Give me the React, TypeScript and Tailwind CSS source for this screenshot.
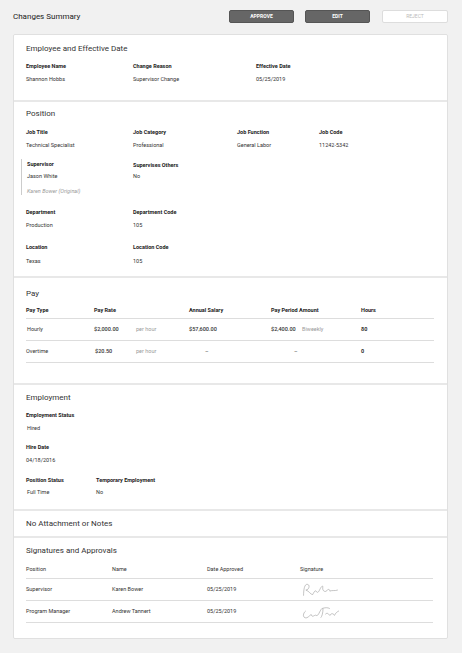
import React from "react";

const L = ({ children, className = "" }: { children: React.ReactNode; className?: string }) => (
  <div className={"text-[5.5px] font-bold text-[#222] leading-[7px] " + className}>{children}</div>
);
const V = ({ children, className = "" }: { children: React.ReactNode; className?: string }) => (
  <div className={"text-[5.5px] text-[#333] leading-[7px] " + className}>{children}</div>
);
const H = ({ children }: { children: React.ReactNode }) => (
  <div className="text-[8px] text-[#333] leading-[10px]">{children}</div>
);

function Sig({ a }: { a: boolean }) {
  return (
    <svg width="46" height="16" viewBox="0 0 40 14" fill="none" stroke="#999" strokeWidth="0.5">
      {a ? (
        <path d="M3 12 C3 6 4 2 6 2 C9 2 8 7 5 7 C8 8 9 11 11 11 C12 9 13 7 14 8 C15 10 16 9 17 7 C18 5 19 3 20 4 C19 7 21 9 23 8 C24 6 26 6 26 8 C28 7 30 8 33 7" />
      ) : (
        <path d="M5 6 C2 8 2 13 6 12 C8 11 10 8 10 10 C11 12 13 9 14 10 C16 11 17 6 19 4 C22 3 24 3 26 4 M20 4 C20 8 19 11 18 12 M22 9 C24 7 25 9 26 10 C27 8 29 8 30 10 C31 8 32 7 34 6" />
      )}
    </svg>
  );
}

export default function App() {
  return (
    <div className="w-[462px] h-[653px] bg-[#f1f1f1] overflow-hidden" style={{ fontFamily: "Roboto, 'Liberation Sans', sans-serif" }}>
      <div className="flex items-center h-[34px] pl-[13px] pr-[14px] pb-[1px]">
        <div className="text-[8px] text-[#222] flex-1">Changes Summary</div>
        <button className="w-[65px] h-[13px] bg-[#666] border border-[#555] rounded-[2px] text-white text-[5px] font-bold">APPROVE</button>
        <button className="ml-[11px] w-[65px] h-[13px] bg-[#666] border border-[#555] rounded-[2px] text-white text-[5px] font-bold">EDIT</button>
        <button className="ml-[12px] w-[66px] h-[13px] bg-white border border-[#ddd] rounded-[2px] text-[#bbb] text-[5px]">REJECT</button>
      </div>
      <div className="mx-[13px] w-[435px] bg-[#e8e8e8] border border-[#e0e0e0] rounded-[2px] flex flex-col gap-[2px] overflow-hidden">
        <div className="bg-white h-[65px] pl-[12px] pt-[9px]">
          <H>Employee and Effective Date</H>
          <div className="flex mt-[9px]">
            <div className="w-[107px]"><L>Employee Name</L><V className="mt-[6px]">Shannon Hobbs</V></div>
            <div className="w-[123px]"><L>Change Reason</L><V className="mt-[6px]">Supervisor Change</V></div>
            <div><L>Effective Date</L><V className="mt-[6px]">05/25/2019</V></div>
          </div>
        </div>
        <div className="bg-white h-[174px] pl-[12px] pt-[7px]">
          <H>Position</H>
          <div className="flex mt-[10px]">
            <div className="w-[107px]"><L>Job Title</L><V className="mt-[6px]">Technical Specialist</V></div>
            <div className="w-[104px]"><L>Job Category</L><V className="mt-[6px]">Professional</V></div>
            <div className="w-[82px]"><L>Job Function</L><V className="mt-[6px]">General Labor</V></div>
            <div><L>Job Code</L><V className="mt-[6px]">11242-5342</V></div>
          </div>
          <div className="flex mt-[10px] -ml-[5px]">
            <div className="w-[112px] border-l border-[#ccc] pl-[5px] py-[2px] h-[36px]">
              <L>Supervisor</L>
              <V className="mt-[5px]">Jason White</V>
              <V className="mt-[8px] italic text-[#999]">Karen Bower (Original)</V>
            </div>
            <div className="pt-[3px]"><L>Supervises Others</L><V className="mt-[4px]">No</V></div>
          </div>
          <div className="flex mt-[14px]">
            <div className="w-[107px]"><L>Department</L><V className="mt-[6px]">Production</V></div>
            <div><L>Department Code</L><V className="mt-[6px]">105</V></div>
          </div>
          <div className="flex mt-[15px]">
            <div className="w-[107px]"><L>Location</L><V className="mt-[7px]">Texas</V></div>
            <div><L>Location Code</L><V className="mt-[7px]">105</V></div>
          </div>
        </div>
        <div className="bg-white h-[105px] pl-[12px] pr-[13px] pt-[11px]">
          <H>Pay</H>
          <div className="flex mt-[8px] pb-[4px] border-b border-[#ddd]">
            <L className="w-[68px]">Pay Type</L>
            <L className="w-[95px]">Pay Rate</L>
            <L className="w-[82px]">Annual Salary</L>
            <L className="w-[90px]">Pay Period Amount</L>
            <L>Hours</L>
          </div>
          <div className="flex items-center h-[22px] border-b border-[#ddd]">
            <V className="w-[68px] pl-[1px]">Hourly</V>
            <V className="w-[42px] font-medium">$2,000.00</V>
            <V className="w-[53px] text-[#999]">per hour</V>
            <V className="w-[82px] font-medium">$57,600.00</V>
            <V className="w-[31px] font-medium">$2,400.00</V>
            <V className="w-[59px] text-[#999]">Biweekly</V>
            <V className="font-bold">80</V>
          </div>
          <div className="flex items-center h-[22px] border-b border-[#ddd]">
            <V className="w-[69px]">Overtime</V>
            <V className="w-[41px] font-medium">$20.50</V>
            <V className="w-[53px] text-[#999]">per hour</V>
            <V className="w-[82px] pl-[16px]">–</V>
            <V className="w-[90px] pl-[23px]">–</V>
            <V className="font-bold">0</V>
          </div>
        </div>
        <div className="bg-white h-[124px] pl-[12px] pt-[8px]">
          <H>Employment</H>
          <L className="mt-[9px]">Employment Status</L>
          <V className="mt-[6px] pl-[1px]">Hired</V>
          <L className="mt-[12px]">Hire Date</L>
          <V className="mt-[6px]">04/18/2016</V>
          <div className="flex mt-[13px]">
            <div className="w-[70px]"><L>Position Status</L><V className="mt-[5px] pl-[1px]">Full Time</V></div>
            <div><L>Temporary Employment</L><V className="mt-[5px]">No</V></div>
          </div>
        </div>
        <div className="bg-white h-[25px] pl-[12px] flex items-center">
          <H>No Attachment or Notes</H>
        </div>
        <div className="bg-white h-[100px] pl-[12px] pr-[14px] pt-[8px]">
          <H>Signatures and Approvals</H>
          <div className="flex mt-[10px] pb-[5px] border-b border-[#ddd]">
            <V className="w-[86px]">Position</V>
            <V className="w-[95px]">Name</V>
            <V className="w-[93px]">Date Approved</V>
            <V>Signature</V>
          </div>
          <div className="flex items-center h-[22px] border-b border-[#ddd]">
            <V className="w-[86px]">Supervisor</V>
            <V className="w-[95px]">Karen Bower</V>
            <V className="w-[93px]">05/25/2019</V>
            <Sig a={true} />
          </div>
          <div className="flex items-center h-[22px] border-b border-[#ddd]">
            <V className="w-[86px]">Program Manager</V>
            <V className="w-[95px]">Andrew Tannert</V>
            <V className="w-[93px]">05/25/2019</V>
            <Sig a={false} />
          </div>
        </div>
      </div>
    </div>
  );
}
